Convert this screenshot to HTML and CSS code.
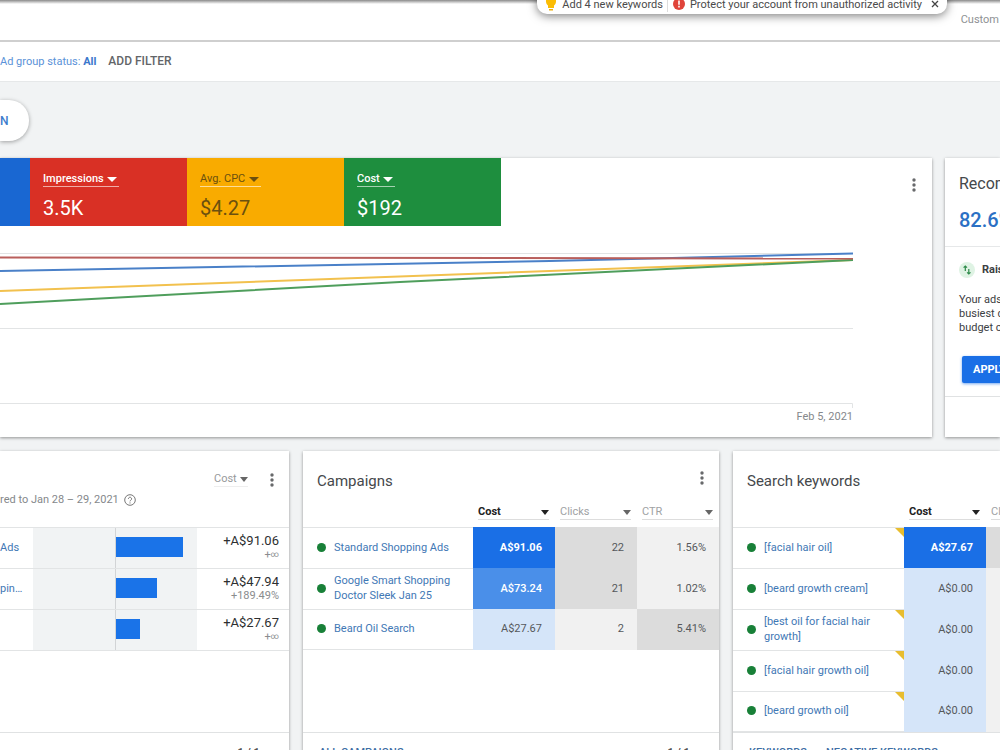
FILE: index.html
```html
<!DOCTYPE html>
<html lang="en">
<head>
<meta charset="utf-8">
<title>Overview</title>
<link rel="stylesheet" href="styles.css">
</head>
<body>
<header class="topbar">
  <span class="range-type">Custom</span>
  <div class="toast">
    <svg class="bulb" viewBox="0 0 12 18" aria-hidden="true"><path d="M6 1a5 5 0 0 0-5 5.500c0 2 1 3.200 2 4V13h6v-2.500c1-.8 2-2 2-4A5 5 0 0 0 6 1z" fill="#fbbc04"/><path d="M4 14h4v1.500H4z" fill="#f0b000"/></svg>
    <a href="#" class="toast-link">Add 4 new keywords</a>
    <a href="#" class="toast-link divided"><svg class="alert" viewBox="0 0 12 12" aria-hidden="true"><circle cx="6" cy="6" r="6" fill="#e0443a"/><path d="M5.200 2.500h1.600v4.300H5.200zM5.200 7.800h1.600v1.600H5.200z" fill="#fff"/></svg>Protect your account from unauthorized activity</a>
    <button class="close" aria-label="Close"><svg viewBox="0 0 8 8"><path d="M1 1l6 6M7 1L1 7" stroke="#444" stroke-width="1.300"/></svg></button>
  </div>
</header>
<nav class="filterbar">
  <a href="#" class="status">Ad group status: <b>All</b></a>
  <button class="add-filter">ADD FILTER</button>
</nav>
<main class="page">
  <button class="new">N</button>

  <div class="row row-top">
    <section class="card summary">
      <div class="scorecards">
        <div class="score blue"></div>
        <div class="score red"><label class="pick"><select aria-label="Metric 2"><option>Impressions</option></select></label><div class="num">3.5K</div></div>
        <div class="score yellow"><label class="pick"><select aria-label="Metric 3"><option>Avg. CPC</option></select></label><div class="num">$4.27</div></div>
        <div class="score green"><label class="pick"><select aria-label="Metric 4"><option>Cost</option></select></label><div class="num">$192</div></div>
      </div>
      <button class="kebab" aria-label="More options"><svg viewBox="0 0 4 14"><circle cx="2" cy="2" r="1.700"/><circle cx="2" cy="7" r="1.700"/><circle cx="2" cy="12" r="1.700"/></svg></button>
      <div class="chart">
        <svg viewBox="0 0 853 168" preserveAspectRatio="none" role="img" aria-label="Metrics over time">
          <g class="grid"><path d="M0 13.500H853"/><path d="M0 88.500H853"/><path d="M0 163.500H852.500V168"/></g>
          <g class="series">
            <path d="M0 31L550 21L853 13.500" stroke="#4a80c8"/>
            <path d="M0 51L853 20" stroke="#f2c14e"/>
            <path d="M0 64L400 42L853 20" stroke="#4f9e5c"/>
            <path d="M0 17.500L853 18.500" stroke="#b95f5c"/>
          </g>
        </svg>
        <div class="axis">Feb 5, 2021</div>
      </div>
    </section>

    <section class="card recs">
      <div class="recs-head"><h2>Recommendations</h2><div class="pct">82.6%</div></div>
      <div class="recs-body">
        <h3><svg viewBox="0 0 16 16" aria-hidden="true"><circle cx="8" cy="8" r="8" fill="#dff3e4"/><path d="M6.300 9V4M4.600 5.700L6.300 4L8 5.700M9.800 7v5M8.100 10.300L9.800 12L11.500 10.300" fill="none" stroke="#2e8b4a" stroke-width="1.200"/></svg>Raise</h3>
        <p>Your ads<br>busiest d<br>budget c</p>
        <button class="apply">APPLY</button>
      </div>
    </section>
  </div>

  <div class="row row-bottom">
    <section class="card changes">
      <div class="head">
        <div class="tools"><label class="pick plain"><select aria-label="Change metric"><option>Cost</option></select></label>
        <button class="kebab" aria-label="More options"><svg viewBox="0 0 4 14"><circle cx="2" cy="2" r="1.700"/><circle cx="2" cy="7" r="1.700"/><circle cx="2" cy="12" r="1.700"/></svg></button></div>
        <div class="compare">red to Jan 28 – 29, 2021 <svg viewBox="0 0 12 12" aria-hidden="true"><circle cx="6" cy="6" r="5.300"/><path d="M4.400 4.800a1.600 1.600 0 1 1 2.400 1.400c-.6.4-.8.600-.8 1.200M6 8.400v1.100"/></svg></div>
      </div>
      <div class="body">
        <table>
          <tr><td class="cut"><a href="#">Ads</a></td><td class="track"><div class="half"><div class="bar" style="width:83%"></div></div></td><td class="delta"><div>+A$91.06</div><small>+<span class="inf">∞</span></small></td></tr>
          <tr><td class="cut"><a href="#">pin…</a></td><td class="track"><div class="half"><div class="bar" style="width:50%"></div></div></td><td class="delta"><div>+A$47.94</div><small>+189.49%</small></td></tr>
          <tr><td class="cut"></td><td class="track"><div class="half"><div class="bar" style="width:30%"></div></div></td><td class="delta"><div>+A$27.67</div><small>+<span class="inf">∞</span></small></td></tr>
        </table>
      </div>
      <footer><span class="pager"><span>‹</span>1 / 1<span>›</span></span></footer>
    </section>

    <section class="card">
      <div class="head titled">
        <h2>Campaigns</h2>
        <button class="kebab" aria-label="More options"><svg viewBox="0 0 4 14"><circle cx="2" cy="2" r="1.700"/><circle cx="2" cy="7" r="1.700"/><circle cx="2" cy="12" r="1.700"/></svg></button>
      </div>
      <div class="body">
        <table class="data">
          <thead><tr><th></th>
            <th><label class="pick col on"><select aria-label="Column 1"><option>Cost</option></select></label></th>
            <th><label class="pick col"><select aria-label="Column 2"><option>Clicks</option></select></label></th>
            <th><label class="pick col"><select aria-label="Column 3"><option>CTR</option></select></label></th></tr></thead>
          <tbody>
            <tr><td><a href="#" class="name">Standard Shopping Ads</a></td><td class="b3">A$91.06</td><td class="g2">22</td><td class="g1">1.56%</td></tr>
            <tr><td><a href="#" class="name">Google Smart Shopping Doctor Sleek Jan 25</a></td><td class="b2">A$73.24</td><td class="g2">21</td><td class="g1">1.02%</td></tr>
            <tr><td><a href="#" class="name">Beard Oil Search</a></td><td class="b1">A$27.67</td><td class="g1">2</td><td class="g2">5.41%</td></tr>
          </tbody>
        </table>
      </div>
      <footer><a href="#">ALL CAMPAIGNS</a><span class="pager"><span>‹</span>1 / 1<span>›</span></span></footer>
    </section>

    <section class="card">
      <div class="head titled"><h2>Search keywords</h2></div>
      <div class="body">
        <table class="data wide">
          <thead><tr><th></th>
            <th><label class="pick col on"><select aria-label="Keyword column 1"><option>Cost</option></select></label></th>
            <th><label class="pick col"><select aria-label="Keyword column 2"><option>Clicks</option></select></label></th>
            <th></th></tr></thead>
          <tbody>
            <tr><td class="flag"><a href="#" class="name">[facial hair oil]</a></td><td class="b3">A$27.67</td><td class="g2"></td><td></td></tr>
            <tr><td><a href="#" class="name">[beard growth cream]</a></td><td class="b1">A$0.00</td><td class="g1"></td><td></td></tr>
            <tr><td class="flag"><a href="#" class="name">[best oil for facial hair growth]</a></td><td class="b1">A$0.00</td><td class="g1"></td><td></td></tr>
            <tr><td class="flag"><a href="#" class="name">[facial hair growth oil]</a></td><td class="b1">A$0.00</td><td class="g1"></td><td></td></tr>
            <tr><td class="flag"><a href="#" class="name">[beard growth oil]</a></td><td class="b1">A$0.00</td><td class="g1"></td><td></td></tr>
          </tbody>
        </table>
      </div>
      <footer><a href="#">KEYWORDS</a><a href="#">NEGATIVE KEYWORDS</a></footer>
    </section>
  </div>
</main>
</body>
</html>
```
FILE: styles.css
```css
* { box-sizing: border-box; }
body {
  margin: 0;
  height: 100vh;
  overflow: hidden;
  background: #f1f3f4;
  color: #3c4043;
  font: 11px/15px Roboto, "Liberation Sans", sans-serif;
}
button, select { font: inherit; color: inherit; border: 0; background: none; padding: 0; margin: 0; }
a { color: #3f78b5; text-decoration: none; }
h2, h3, p { margin: 0; font-weight: 400; }
h2 { font-size: 15px; line-height: 20px; color: #45484b; }

.topbar {
  position: relative;
  height: 42px;
  display: flex;
  justify-content: flex-end;
  align-items: flex-start;
  padding: 12px 1px 0 0;
  background: linear-gradient(#8a8a8a, #fff 4px);
  border-bottom: 2px solid #cfcfcf;
}
.range-type { color: #8e9194; }
.toast {
  position: absolute;
  top: -12px;
  right: 53px;
  height: 26px;
  display: flex;
  align-items: center;
  padding: 6px 8px 0 8px;
  background: #fff;
  border-radius: 10px;
  box-shadow: 0 2px 10px rgba(0, 0, 0, .5);
  white-space: nowrap;
}
.toast-link { color: #4a4a4a; }
.bulb { width: 12px; height: 18px; margin-right: 5px; }
.alert { width: 12px; height: 12px; margin-right: 5px; }
.divided { display: flex; align-items: center; margin-left: 4px; padding-left: 5px; border-left: 1px solid #ddd; }
.close { display: flex; margin-left: 9px; }
.close svg { width: 8px; height: 8px; }

.filterbar {
  height: 40px;
  display: flex;
  align-items: center;
  gap: 12px;
  background: #fff;
  border-bottom: 1px solid #e6e8e9;
}
.status { color: #5a92d8; white-space: pre; }
.status b { color: #3c78cc; }
.add-filter { color: #626568; font-size: 12px; font-weight: 500; }

.page { padding-top: 18px; }
.new {
  display: block;
  width: 29px;
  height: 41px;
  margin-bottom: 17px;
  padding-top: 2px;
  text-align: left;
  font-size: 12px;
  font-weight: 500;
  color: #3c7ccc;
  background: #fff;
  border-radius: 0 20px 20px 0;
  box-shadow: 0 1px 4px rgba(0, 0, 0, .35);
}

.row { display: grid; }
.row-top { grid-template-columns: minmax(0, 932fr) minmax(0, 55fr); gap: 13px; margin-bottom: 14px; }
.row-bottom { grid-template-columns: minmax(0, 289fr) minmax(0, 416fr) minmax(0, 267fr); gap: 14px; }
.card { background: #fff; box-shadow: 0 1px 3px rgba(0, 0, 0, .4); min-width: 0; }
.kebab { display: flex; }
.kebab svg { width: 4px; height: 14px; fill: #68696b; }

.summary { display: grid; grid-template-columns: 1fr auto; padding-bottom: 12px; }
.summary .kebab { align-self: start; margin: 20px 16px 0 0; }
.scorecards { display: flex; }
.score { width: 157px; height: 68px; padding: 14px 13px 0; color: #fff; }
.blue { width: 30px; padding: 0; background: #1967d2; }
.red { background: #d93025; }
.yellow { background: #f9ab00; color: #6b500f; }
.green { background: #1e8e3e; }
.num { margin-top: 9px; font-size: 20px; line-height: 24px; }

.pick { display: inline-flex; align-items: center; border-bottom: 1px solid rgba(255, 255, 255, .6); }
.score .pick { display: flex; width: max-content; padding-right: 2px; }
.pick select { appearance: none; outline: 0; height: 14px; line-height: 14px; }
.pick::after {
  content: "";
  margin-left: 3px;
  border: 5px solid transparent;
  border-top-color: currentColor;
  border-bottom: 0;
}
.red .pick, .green .pick { font-weight: 500; }
.plain { color: #97999b; border-color: #eee; }
.plain::after, .col::after { border-width: 4px; border-top-width: 5px; border-bottom: 0; border-top-color: #666; }
.col { display: flex; justify-content: space-between; border-color: #ddd; color: #a0a2a4; font-weight: 400; }
.on { color: #222; font-weight: 700; }
.on::after { border-top-color: #222; }

.chart { grid-column: 1 / -1; margin: 14px 79px 0 0; }
.chart svg { display: block; width: 100%; height: 168px; }
.chart path { fill: none; vector-effect: non-scaling-stroke; }
.grid path { stroke: #e2e4e5; }
.series path { stroke-width: 2; }
.axis { padding-top: 1px; text-align: right; color: #85888b; line-height: 16px; }

.recs { overflow: hidden; white-space: nowrap; }
.recs-head { padding: 16px 14px 14px; border-bottom: 1px solid #e6e8e9; }
.recs-head h2 { font-size: 16px; }
.pct { margin-top: 14px; font-size: 20px; line-height: 24px; font-weight: 500; color: #2b70c4; }
.recs-body { padding: 15px 14px 13px; border-bottom: 1px solid #e0e2e3; }
.recs h3 { display: flex; align-items: center; gap: 7px; font-size: 11px; line-height: 16px; font-weight: 700; }
.recs h3 svg { flex: none; width: 16px; height: 16px; }
.recs p { margin-top: 15px; line-height: 14px; }
.apply {
  margin: 21px 0 0 3px;
  height: 27px;
  padding: 0 11px;
  color: #fff;
  font-weight: 700;
  background: #1a6fe6;
  border-radius: 2px;
  box-shadow: 0 1px 3px rgba(26, 111, 230, .6);
}

.head { height: 76px; padding: 20px 15px 0 0; }
.titled { display: flex; justify-content: space-between; align-items: flex-start; height: 52px; padding: 20px 15px 0 14px; }
.tools { display: flex; justify-content: flex-end; align-items: center; gap: 22px; height: 17px; }
.compare { display: flex; align-items: center; gap: 5px; margin-top: 4px; color: #85888b; }
.compare svg { width: 12px; height: 12px; fill: none; stroke: #777; }

.body { min-height: 205px; overflow: hidden; }
.titled + .body { min-height: 229px; }
table { width: 100%; table-layout: fixed; border-collapse: separate; border-spacing: 0; }
td { height: 41px; padding: 0 0 2px; border-top: 1px solid #e2e4e5; }
tr:last-child td { border-bottom: 1px solid #e2e4e5; }
.cut { width: 33px; }
.track { width: 164px; padding: 0; background: #f1f3f4; }
.half { width: 50%; height: 40px; margin-left: 50%; padding: 9px 0; border-left: 1px solid #d2d4d6; }
.bar { height: 20px; background: #1a73e8; }
.delta { padding-right: 10px; text-align: right; }
.delta div { font-size: 13px; line-height: 15px; color: #2d2f31; }
.delta small { display: block; font-size: 11px; line-height: 13px; color: #8a8c8e; }
.inf { font-size: 8px; line-height: 8px; vertical-align: 1px; }

.data th { width: 82px; height: 24px; padding: 0 6px 7px 5px; vertical-align: bottom; text-align: left; }
.data th:first-child { width: auto; padding: 0; }
.data td { padding-right: 13px; text-align: right; color: #55585b; }
.data td:first-child { padding: 0 14px 2px; text-align: left; position: relative; }
.wide { width: 417px; }
.name { display: flex; align-items: center; gap: 8px; }
.name::before { content: ""; flex: none; width: 9px; height: 9px; border-radius: 50%; background: #188038; }
.flag::after {
  content: "";
  position: absolute;
  top: 0;
  right: 0;
  border-top: 9px solid #e8bd2f;
  border-left: 9px solid transparent;
}
.data .b3 { background: #1a6fe6; border-color: #1a6fe6; color: #fff; font-weight: 700; }
.data .b2 { background: #4a8fe9; border-color: #4a8fe9; color: #fff; font-weight: 500; }
.data .b1 { background: #d5e5f9; border-color: #d5e5f9; }
.data .g2 { background: #dcdcdc; border-color: #dcdcdc; }
.data .g1 { background: #f1f1f1; border-color: #f1f1f1; }

footer { display: flex; gap: 19px; padding: 12px 16px 14px; border-top: 1px solid #e0e2e3; font-weight: 500; white-space: nowrap; }
footer a { color: #3f6fa5; }
.pager { display: flex; gap: 10px; margin-left: auto; color: #444; }
```
